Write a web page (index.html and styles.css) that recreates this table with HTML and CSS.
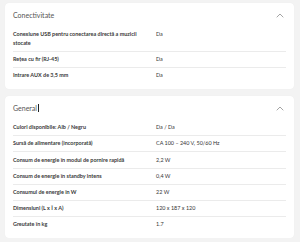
FILE: index.html
```html
<!DOCTYPE html>
<html lang="ro">
<head>
<meta charset="utf-8">
<link rel="stylesheet" href="styles.css">
</head>
<body>
<section class="card">
  <div class="card-head">
    <h2 class="card-title">Conectivitate</h2>
    <svg class="chev" width="8" height="5" viewBox="0 0 8 5"><path d="M0.7 4.3 L4 1 L7.3 4.3" fill="none" stroke="#9a9a9a" stroke-width="0.9"/></svg>
  </div>
  <div class="specs">
    <div class="row"><div class="label">Conexiune USB pentru conectarea directă a muzicii stocate</div><div class="value">Da</div></div>
    <div class="row"><div class="label">Rețea cu fir (RJ-45)</div><div class="value">Da</div></div>
    <div class="row last"><div class="label">Intrare AUX de 3,5 mm</div><div class="value">Da</div></div>
  </div>
</section>
<section class="card">
  <div class="card-head">
    <h2 class="card-title">General<span class="caret"></span></h2>
    <svg class="chev" width="8" height="5" viewBox="0 0 8 5"><path d="M0.7 4.3 L4 1 L7.3 4.3" fill="none" stroke="#9a9a9a" stroke-width="0.9"/></svg>
  </div>
  <div class="specs">
    <div class="row"><div class="label">Culori disponibile: Alb / Negru</div><div class="value">Da / Da</div></div>
    <div class="row"><div class="label">Sursă de alimentare (încorporată)</div><div class="value">CA 100 – 240 V, 50/60 Hz</div></div>
    <div class="row"><div class="label">Consum de energie în modul de pornire rapidă</div><div class="value">2,2 W</div></div>
    <div class="row"><div class="label">Consum de energie în standby intens</div><div class="value">0,4 W</div></div>
    <div class="row"><div class="label">Consumul de energie în W</div><div class="value">22 W</div></div>
    <div class="row"><div class="label">Dimensiuni (L x Î x A)</div><div class="value">120 x 187 x 120</div></div>
    <div class="row last"><div class="label">Greutate în kg</div><div class="value">1.7</div></div>
  </div>
</section>
</body>
</html>
```
FILE: styles.css
```css
html, body {
  margin: 0;
  padding: 0;
}
body {
  background: #f3f3f3;
  font-family: Lato, "Liberation Sans", sans-serif;
  color: #333;
  padding: 3px 6px 0 5px;
  display: flex;
  flex-direction: column;
  gap: 7px;
}
.card {
  background: #fff;
  border-radius: 4px;
  box-shadow: 0 0 1px rgba(0,0,0,0.06);
  padding: 0 8px 5.5px 8px;
}
.card-head {
  display: flex;
  justify-content: space-between;
  align-items: center;
  height: 20px;
  padding-top: 2px;
}
.card-title {
  margin: 0;
  font-size: 7px;
  font-weight: 400;
  color: #555;
  display: flex;
  align-items: center;
}
.caret {
  display: inline-block;
  width: 0.7px;
  height: 8px;
  background: #222;
  margin-left: 0.5px;
}
.chev {
  margin-right: 2px;
}
.specs {
  margin-top: 2px;
}
.row {
  display: grid;
  grid-template-columns: 137px 1fr;
  column-gap: 6px;
  padding: 3.1px 0;
  line-height: 9px;
  font-size: 5.45px;
  border-bottom: 1px solid #ebebeb;
}
.row.last {
  border-bottom: none;
}
.label {
  font-weight: 700;
  color: #3a3a3a;
}
.value {
  font-weight: 400;
  color: #333;
}
```
